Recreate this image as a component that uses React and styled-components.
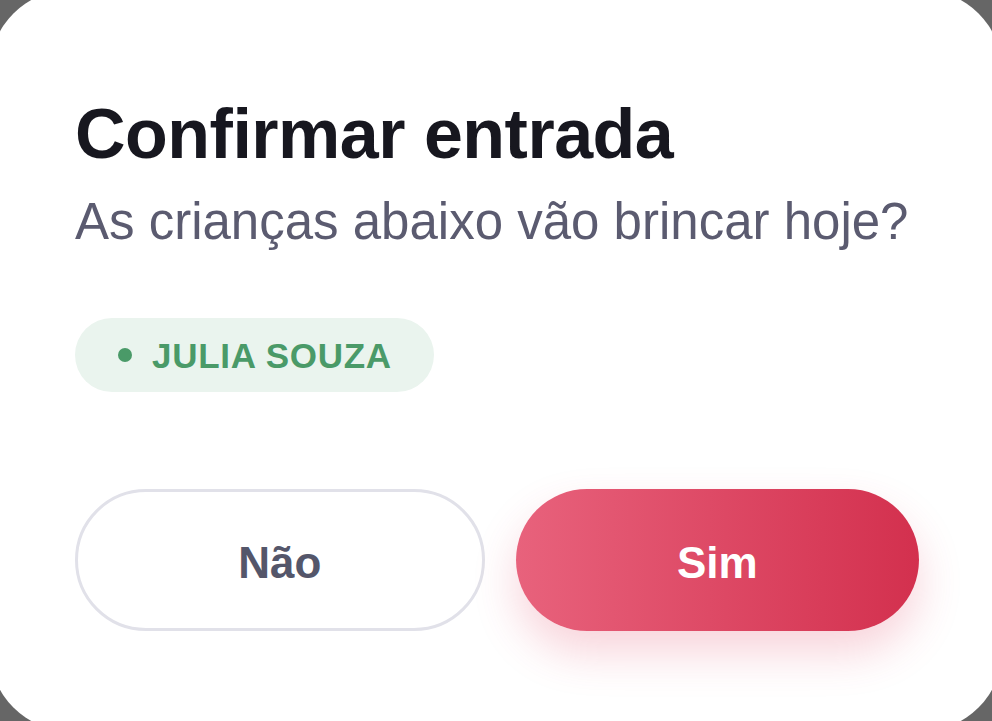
import React from "react";
import styled, { createGlobalStyle } from "styled-components";

const GlobalStyle = createGlobalStyle`
  html, body {
    margin: 0;
    padding: 0;
    height: 100%;
    overflow: hidden;
    background: #666666;
  }
  #root {
    height: 100%;
  }
`;

const App = () => {
  return (
    <>
      <GlobalStyle />
      <Card>
        <Title>Confirmar entrada</Title>
        <Subtitle>As crianças abaixo vão brincar hoje?</Subtitle>
        <ChipRow>
          <Chip>
            <Dot />
            JULIA SOUZA
          </Chip>
        </ChipRow>
        <Actions>
          <Button>Não</Button>
          <Button primary>Sim</Button>
        </Actions>
      </Card>
    </>
  );
};

export default App;

const Card = styled.div`
  box-sizing: border-box;
  margin: -10px;
  height: calc(100% + 20px);
  background: #ffffff;
  border-radius: 80px;
  padding: 102px 83px 0 85px;
  display: flex;
  flex-direction: column;
  font-family: "Liberation Sans", Arial, sans-serif;
`;

const Title = styled.h1`
  margin: 0;
  font-size: 70px;
  line-height: 84px;
  font-weight: 700;
  letter-spacing: -0.5px;
  color: #17171f;
`;

const Subtitle = styled.p`
  margin: 15px 0 0;
  font-size: 51px;
  line-height: 61px;
  font-weight: 400;
  color: #5b5b70;
`;

const ChipRow = styled.div`
  display: flex;
  margin-top: 66px;
`;

const Chip = styled.div`
  display: flex;
  align-items: center;
  gap: 20px;
  height: 74px;
  box-sizing: border-box;
  padding: 2px 42px 0 43px;
  border-radius: 37px;
  background: #eaf4ee;
  color: #4a9a68;
  font-size: 35px;
  font-weight: 700;
  letter-spacing: 0.7px;
`;

const Dot = styled.span`
  width: 14px;
  height: 14px;
  margin-top: -2px;
  border-radius: 50%;
  background: #4a9a68;
`;

const Actions = styled.div`
  display: flex;
  gap: 31px;
  margin-top: 97px;
`;

const Button = styled.button`
  flex: 1;
  height: 142px;
  box-sizing: border-box;
  padding-top: 6px;
  border-radius: 71px;
  font-family: "Liberation Sans", Arial, sans-serif;
  font-size: 44px;
  font-weight: 700;
  cursor: pointer;
  border: ${(p) => (p.primary ? "none" : "3px solid #e1e1e9")};
  background: ${(p) =>
    p.primary ? "linear-gradient(90deg, #e8627c 0%, #d3304e 100%)" : "#ffffff"};
  color: ${(p) => (p.primary ? "#ffffff" : "#54566a")};
  box-shadow: ${(p) =>
    p.primary ? "0 22px 44px rgba(222, 60, 90, 0.22)" : "none"};
`;
